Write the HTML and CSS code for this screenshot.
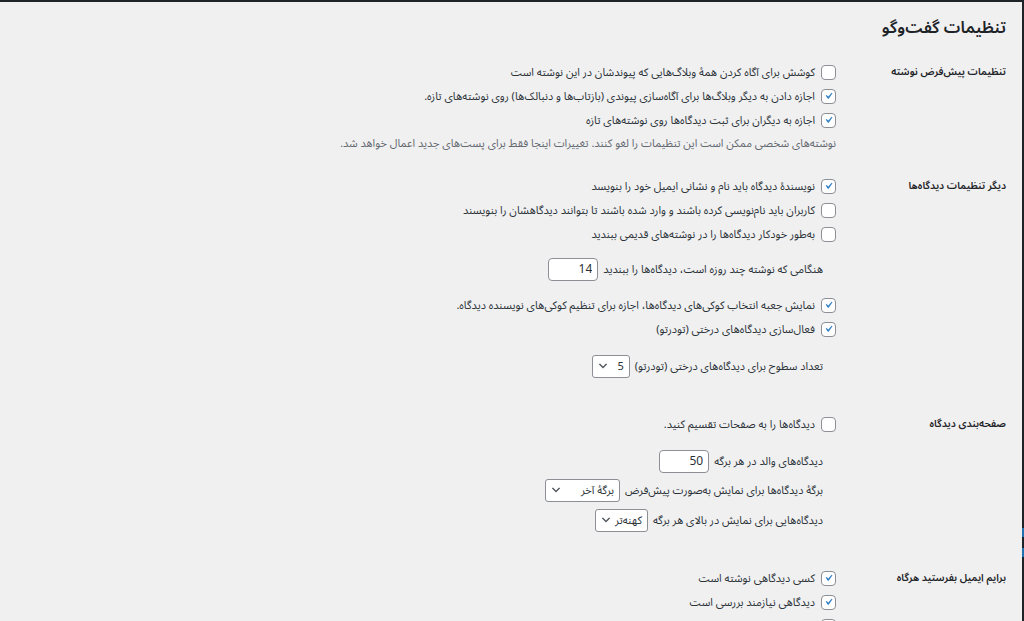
FILE: index.html
```html
<!DOCTYPE html>
<html lang="fa" dir="rtl">
<head>
    <meta charset="UTF-8">
    <title>تنظیمات گفت‌وگو</title>
    <link rel="stylesheet" href="styles.css">
</head>
<body>
    <div class="admin-bar"></div>
    <div class="layout">
        <div class="admin-menu">
            <span class="menu-current first"></span>
            <span class="menu-current second"></span>
        </div>
        <div class="wrap">
            <h1>تنظیمات گفت‌وگو</h1>

            <div class="form-table">
                <div class="form-row">
                    <div class="th">تنظیمات پیش‌فرض نوشته</div>
                    <div class="td">
                        <div class="line"><span class="box"></span>کوشش برای آگاه کردن همهٔ وبلاگ‌هایی که پیوندشان در این نوشته است</div>
                        <div class="line"><span class="box checked"><svg viewBox="0 0 20 20"><path d="M14.83 4.89l1.34.94-5.81 8.38H9.02L5.78 9.67l1.34-1.25 2.57 2.4z"/></svg></span>اجازه دادن به دیگر وبلاگ‌ها برای آگاه‌سازی پیوندی (بازتاب‌ها و دنبالک‌ها) روی نوشته‌های تازه.</div>
                        <div class="line"><span class="box checked"><svg viewBox="0 0 20 20"><path d="M14.83 4.89l1.34.94-5.81 8.38H9.02L5.78 9.67l1.34-1.25 2.57 2.4z"/></svg></span>اجازه به دیگران برای ثبت دیدگاه‌ها روی نوشته‌های تازه</div>
                        <p class="description">نوشته‌های شخصی ممکن است این تنظیمات را لغو کنند. تغییرات اینجا فقط برای پست‌های جدید اعمال خواهد شد.</p>
                    </div>
                </div>

                <div class="form-row">
                    <div class="th">دیگر تنظیمات دیدگاه‌ها</div>
                    <div class="td">
                        <div class="line"><span class="box checked"><svg viewBox="0 0 20 20"><path d="M14.83 4.89l1.34.94-5.81 8.38H9.02L5.78 9.67l1.34-1.25 2.57 2.4z"/></svg></span>نویسندهٔ دیدگاه باید نام و نشانی ایمیل خود را بنویسد</div>
                        <div class="line"><span class="box"></span>کاربران باید نام‌نویسی کرده باشند و وارد شده باشند تا بتوانند دیدگاهشان را بنویسند</div>
                        <div class="line"><span class="box"></span>به‌طور خودکار دیدگاه‌ها را در نوشته‌های قدیمی ببندید</div>
                        <div class="field gap-11">هنگامی که نوشته چند روزه است، دیدگاه‌ها را ببندید <input type="text" class="small-text" value="14"></div>
                        <div class="line gap-12"><span class="box checked"><svg viewBox="0 0 20 20"><path d="M14.83 4.89l1.34.94-5.81 8.38H9.02L5.78 9.67l1.34-1.25 2.57 2.4z"/></svg></span>نمایش جعبه انتخاب کوکی‌های دیدگاه‌ها، اجازه برای تنظیم کوکی‌های نویسنده دیدگاه.</div>
                        <div class="line"><span class="box checked"><svg viewBox="0 0 20 20"><path d="M14.83 4.89l1.34.94-5.81 8.38H9.02L5.78 9.67l1.34-1.25 2.57 2.4z"/></svg></span>فعال‌سازی دیدگاه‌های درختی (تودرتو)</div>
                        <div class="field gap-13">تعداد سطوح برای دیدگاه‌های درختی (تودرتو)
                            <div class="select select-levels"><span>5</span><svg viewBox="0 0 20 20"><path d="M5 6l5 5 5-5 2 1-7 7-7-7z"/></svg></div>
                        </div>
                    </div>
                </div>

                <div class="form-row">
                    <div class="th">صفحه‌بندی دیدگاه</div>
                    <div class="td">
                        <div class="line"><span class="box"></span>دیدگاه‌ها را به صفحات تقسیم کنید.</div>
                        <div class="field gap-13">دیدگاه‌های والد در هر برگه <input type="text" class="small-text" value="50"></div>
                        <div class="field gap-5">برگهٔ دیدگاه‌ها برای نمایش به‌صورت پیش‌فرض
                            <div class="select select-page"><span>برگهٔ آخر</span><svg viewBox="0 0 20 20"><path d="M5 6l5 5 5-5 2 1-7 7-7-7z"/></svg></div>
                        </div>
                        <div class="field gap-6">دیدگاه‌هایی برای نمایش در بالای هر برگه
                            <div class="select select-order"><span>کهنه‌تر</span><svg viewBox="0 0 20 20"><path d="M5 6l5 5 5-5 2 1-7 7-7-7z"/></svg></div>
                        </div>
                    </div>
                </div>

                <div class="form-row">
                    <div class="th">برایم ایمیل بفرستید هرگاه</div>
                    <div class="td">
                        <div class="line"><span class="box checked"><svg viewBox="0 0 20 20"><path d="M14.83 4.89l1.34.94-5.81 8.38H9.02L5.78 9.67l1.34-1.25 2.57 2.4z"/></svg></span>کسی دیدگاهی نوشته است</div>
                        <div class="line"><span class="box checked"><svg viewBox="0 0 20 20"><path d="M14.83 4.89l1.34.94-5.81 8.38H9.02L5.78 9.67l1.34-1.25 2.57 2.4z"/></svg></span>دیدگاهی نیازمند بررسی است</div>
                        <div class="line"><span class="box checked"><svg viewBox="0 0 20 20"><path d="M14.83 4.89l1.34.94-5.81 8.38H9.02L5.78 9.67l1.34-1.25 2.57 2.4z"/></svg></span>کسی به دیدگاه من پاسخ داده است</div>
                    </div>
                </div>
            </div>
        </div>
    </div>
</body>
</html>
```

FILE: styles.css
```css
html, body {
    margin: 0;
    height: 100%;
    overflow: hidden;
}
body {
    background: #f0f0f1;
    color: #1d2327;
    font-family: "Noto Sans Arabic", "DejaVu Sans", sans-serif;
    font-size: 11px;
}
.admin-bar {
    height: 2px;
    background: #1d2327;
}
.layout {
    display: flex;
    height: 100%;
}
.admin-menu {
    width: 2px;
    flex-shrink: 0;
    background: #1d2327;
    position: relative;
}
.menu-current {
    position: absolute;
    right: 0;
    width: 2px;
    height: 9px;
    background: #2271b1;
}
.menu-current.first { top: 526px; }
.menu-current.second { top: 546px; }
.wrap {
    flex: 1;
    padding-right: 16px;
}
h1 {
    margin: 10px 0 0;
    font-size: 16.5px;
    font-weight: 600;
    line-height: 32px;
    color: #1d2327;
}
.form-table {
    margin-top: 16px;
}
.form-row {
    display: grid;
    grid-template-columns: 160px 1fr;
    column-gap: 10px;
    margin-bottom: 34px;
}
.form-row:first-child {
    margin-bottom: 18px;
}
.th {
    font-size: 10.2px;
    font-weight: 600;
    line-height: 24px;
    color: #1d2327;
}
.line {
    display: flex;
    align-items: center;
    gap: 6px;
    height: 24px;
    color: #2c3338;
}
.box {
    width: 13px;
    height: 13px;
    border: 1px solid #8c8f94;
    border-radius: 4px;
    background: #fff;
    flex-shrink: 0;
    display: flex;
    align-items: center;
    justify-content: center;
}
.box svg {
    width: 18px;
    height: 18px;
    fill: #3582c4;
}
.description {
    margin: 0;
    line-height: 24px;
    color: #646970;
}
.field {
    display: flex;
    align-items: center;
    gap: 5px;
    height: 24px;
    padding-right: 13px;
    color: #2c3338;
}
.gap-5 { margin-top: 5px; }
.gap-6 { margin-top: 6px; }
.gap-11 { margin-top: 11px; }
.gap-12 { margin-top: 12px; }
.gap-13 { margin-top: 13px; }
.small-text {
    width: 50px;
    height: 23px;
    box-sizing: border-box;
    border: 1px solid #8c8f94;
    border-radius: 4px;
    background: #fff;
    padding: 0 5px;
    font-family: "Noto Sans Arabic", "DejaVu Sans", sans-serif;
    font-size: 12px;
    color: #2c3338;
    text-align: right;
}
.select {
    display: flex;
    align-items: center;
    justify-content: space-between;
    height: 23px;
    box-sizing: border-box;
    border: 1px solid #8c8f94;
    border-radius: 3px;
    background: #fff;
    padding: 0 5px 0 4px;
    color: #2c3338;
}
.select svg {
    width: 12px;
    height: 12px;
    fill: #50575e;
}
.select-levels { width: 38px; }
.select-page { width: 75px; }
.select-order { width: 53px; }
```
